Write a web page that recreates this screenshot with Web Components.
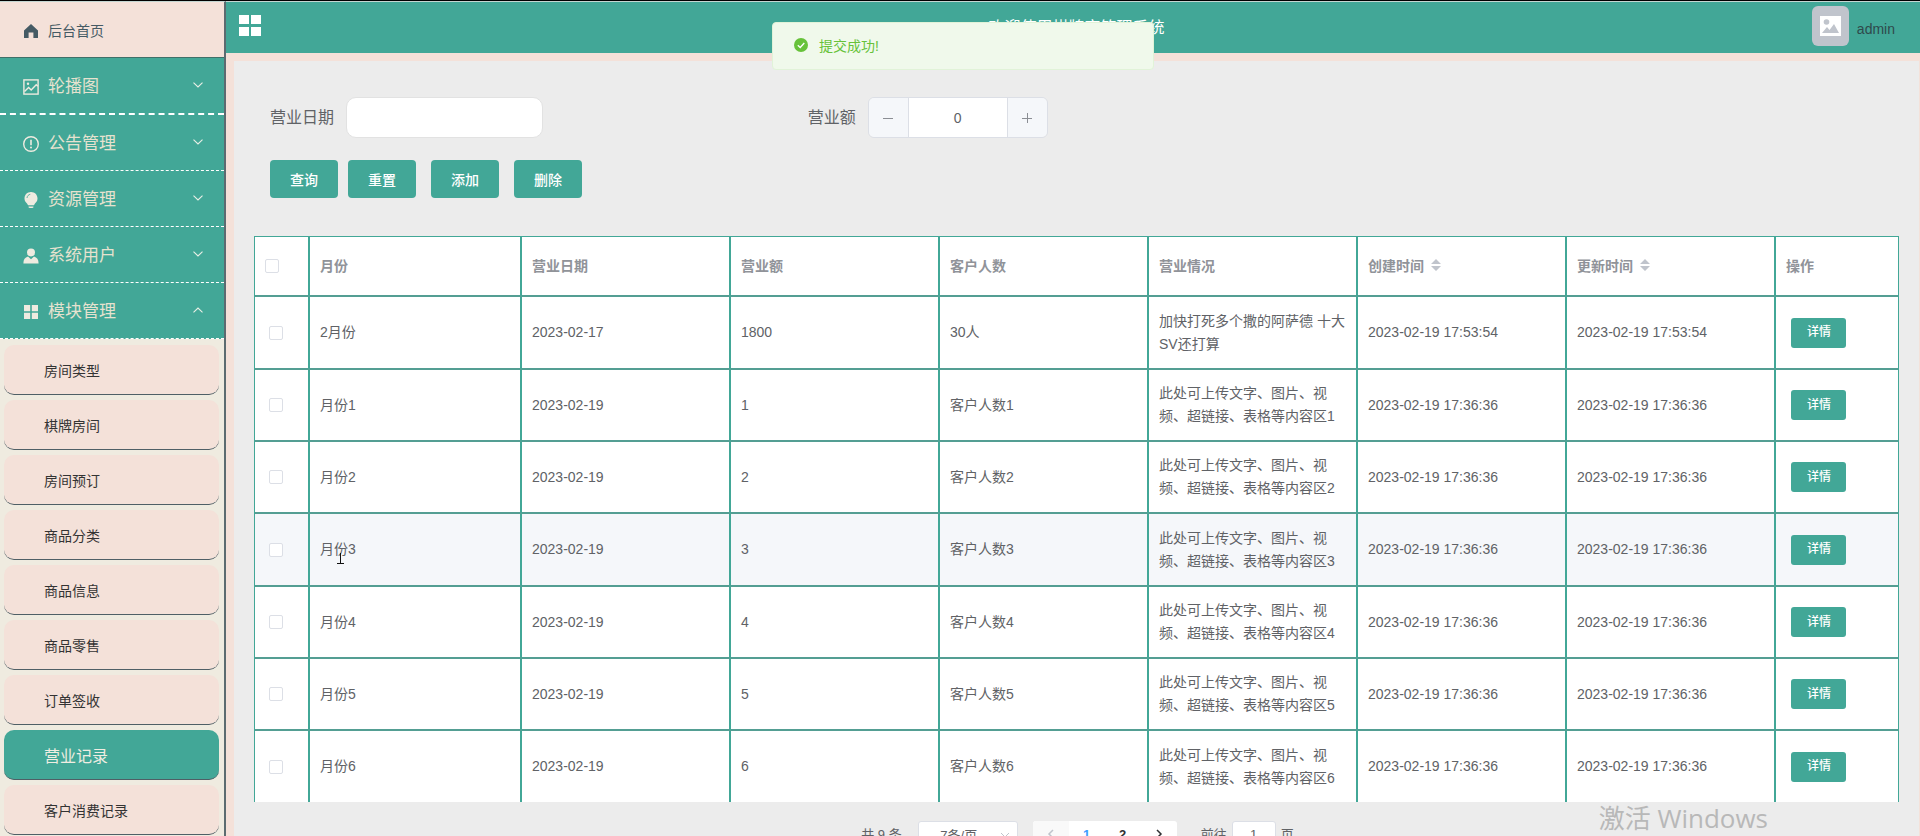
<!DOCTYPE html>
<html lang="zh-CN">
<head>
<meta charset="utf-8">
<title>营业记录</title>
<style>
  html, body { margin: 0; height: 100%; }
  body {
    overflow: hidden;
    font-family: "Liberation Sans", "Noto Sans CJK SC", sans-serif;
    font-size: 14px;
    color: #606266;
    --green: #42a797;
    --pink: #f4e1d9;
    --cream: #efebe0;
    --slate: #5c6b70;
  }
</style>
</head>
<body>
<app-shell>
  <side-bar slot="side">
    <home-link>后台首页</home-link>
    <nav-group icon="picture" thick>轮播图</nav-group>
    <nav-group icon="warning">公告管理</nav-group>
    <nav-group icon="bulb">资源管理</nav-group>
    <nav-group icon="user">系统用户</nav-group>
    <nav-group icon="grid" open>模块管理</nav-group>
    <sub-menu>
      <sub-item>房间类型</sub-item>
      <sub-item>棋牌房间</sub-item>
      <sub-item>房间预订</sub-item>
      <sub-item>商品分类</sub-item>
      <sub-item>商品信息</sub-item>
      <sub-item>商品零售</sub-item>
      <sub-item>订单签收</sub-item>
      <sub-item active>营业记录</sub-item>
      <sub-item>客户消费记录</sub-item>
    </sub-menu>
  </side-bar>
  <top-bar slot="top">
    欢迎使用棋牌室管理系统
    <span slot="user">admin</span>
  </top-bar>
  <search-form></search-form>
  <record-table></record-table>
  <page-nav></page-nav>
</app-shell>
<toast-message>提交成功!</toast-message>
<os-watermark>激活 Windows</os-watermark>
<text-cursor></text-cursor>

<script>
const define = (name, html, setup) => {
  const template = document.createElement('template');
  template.innerHTML = html;
  customElements.define(name, class extends HTMLElement {
    static observedAttributes = ['name'];
    constructor() {
      super();
      this.attachShadow({ mode: 'open' }).append(template.content.cloneNode(true));
    }
    connectedCallback() { if (setup) setup(this, this.shadowRoot); }
    attributeChangedCallback() { if (setup) setup(this, this.shadowRoot); }
  });
};

const icons = {
  home: '<path d="M8 1 1 7.4V15h4.6V9.6h4.8V15H15V7.4z" fill="currentColor"/>',
  picture: '<g fill="none" stroke="currentColor" stroke-width="1.4"><rect x=".9" y=".9" width="14.2" height="14.2"/><path d="M1.5 12.5 5.6 8.4l2.6 2.7 5-5.4 1.6 1.6"/></g><circle cx="5" cy="4.8" r="1.2" fill="currentColor"/>',
  warning: '<circle cx="8" cy="8" r="7.3" fill="none" stroke="currentColor" stroke-width="1.4"/><path d="M7.2 3.8h1.6v5.4H7.2z" fill="currentColor"/><circle cx="8" cy="11.5" r="1" fill="currentColor"/>',
  bulb: '<path d="M8 0C4.200 0 1.500 2.800 1.500 6.400c0 2.400 1.300 3.800 2.500 5.100.5.600.9 1.200 1 1.700h6c.1-.5.5-1.100 1-1.700 1.200-1.300 2.500-2.700 2.500-5.100C14.500 2.800 11.800 0 8 0z" fill="currentColor"/><path d="M5.600 14.600h4.800v.5c0 .6-.5.900-1 .9H6.600c-.5 0-1-.3-1-.9z" fill="currentColor"/><path d="M4 6C4.200 4 5.500 2.600 7.300 2.300" fill="none" stroke="#42a797" stroke-width=".8"/>',
  user: '<circle cx="8" cy="4.400" r="4" fill="currentColor"/><path d="M.4 15.500c0-3.700 1.600-6.100 4.600-6.900l3 2.700 3-2.700c3 .8 4.600 3.200 4.600 6.900z" fill="currentColor"/>',
  grid: '<path d="M1 1h6.200v6.200H1zM8.800 1H15v6.200H8.800zM1 8.800h6.200V15H1zM8.800 8.800H15V15H8.800z" fill="currentColor"/>'
};

define('app-icon', `
  <style>
    :host { display: block; width: 16px; height: 16px; }
    svg { display: block; width: 100%; height: 100%; }
  </style>
  <svg viewBox="0 0 16 16" aria-hidden="true"></svg>`,
  (el, root) => { root.querySelector('svg').innerHTML = icons[el.getAttribute('name')] || ''; });

define('app-shell', `
  <style>
    :host {
      display: grid; grid-template: auto minmax(0, 1fr) / 226px minmax(0, 1fr);
      height: 100vh; box-sizing: border-box;
      border-top: 1px solid #000; background: #ececec;
    }
    aside { grid-row: 1 / 3; overflow: hidden; border-top: 1px solid #c4d6d2; border-right: 2px solid var(--slate); background: var(--cream); }
    header { border-top: 1px solid #c4d6d2; }
    main { overflow: hidden; border: 8px solid var(--pink); border-right-width: 1px; border-bottom: 0; padding: 36px 20px 0; }
  </style>
  <aside><slot name="side"></slot></aside>
  <header><slot name="top"></slot></header>
  <main><slot></slot></main>`);

define('side-bar', `
  <style>:host { display: block; }</style>
  <nav><slot></slot></nav>`);

define('home-link', `
  <style>
    :host { display: block; }
    a {
      display: flex; align-items: center; gap: 9px; height: 56px; padding: 0 23px;
      box-sizing: border-box; background: var(--pink); color: #455a64;
      text-decoration: none; border-bottom: 1px solid #3f7069;
    }
    app-icon { margin-top: 2px; }
  </style>
  <a href="#home"><app-icon name="home"></app-icon><span><slot></slot></span></a>`);

define('nav-group', `
  <style>
    :host { display: block; }
    button {
      display: flex; align-items: center; gap: 9px; width: 100%; height: 56px; box-sizing: border-box;
      padding: 0 21px 2px 23px; border: 0; border-bottom: 1px dashed #fff;
      background: var(--green); color: #e6e2cf; font: inherit; font-size: 17px; text-align: left;
    }
    :host([thick]) button { height: 57px; border-bottom-width: 2px; }
    app-icon { color: var(--cream); margin-top: 5px; }
    span { flex: 1; }
    svg { width: 10px; height: 6px; }
    :host([open]) svg { transform: rotate(180deg); }
  </style>
  <button type="button">
    <app-icon></app-icon><span><slot></slot></span>
    <svg viewBox="0 0 10 6" aria-hidden="true"><path d="M.5.6 5 5 9.500.6" fill="none" stroke="#e9efe6" stroke-width="1.100"/></svg>
  </button>`,
  (el, root) => {
    root.querySelector('app-icon').setAttribute('name', el.getAttribute('icon'));
    root.querySelector('button').setAttribute('aria-expanded', el.hasAttribute('open'));
  });

define('sub-menu', `
  <style>:host { display: flex; flex-direction: column; gap: 5px; padding: 6px 5px 6px 4px; }</style>
  <slot></slot>`);

define('sub-item', `
  <style>
    :host { display: block; }
    a {
      display: flex; align-items: center; height: 50px; box-sizing: border-box; padding: 1px 0 0 40px;
      border-bottom: 1px solid #4f5f66; border-radius: 10px;
      background: var(--pink); color: #333; text-decoration: none;
    }
    :host([active]) a { background: var(--green); color: #f0ede2; font-size: 16px; }
  </style>
  <a href="#module"><slot></slot></a>`);

define('top-bar', `
  <style>
    :host {
      display: grid; grid-template-columns: 1fr auto 1fr; align-items: center;
      height: 51px; padding: 0 6px 0 13px; background: var(--green);
    }
    .menu { width: 22px; height: 22px; padding: 0; border: 0; background: none; margin-bottom: 4px; }
    .menu svg { display: block; }
    h1 { margin: 0; padding-bottom: 4px; font-size: 16px; font-weight: 400; color: #fff; }
    .user { display: flex; align-items: center; justify-content: flex-end; gap: 8px; padding: 0 19px 4px 0; color: #2f4a4c; }
    .avatar { display: grid; place-items: center; width: 37px; height: 40px; border-radius: 6px; background: #c0c4cc; }
    .name { padding-top: 6px; }
  </style>
  <button class="menu" type="button" aria-label="菜单">
    <svg width="22" height="22" viewBox="0 0 22 22"><path d="M0 0h10v9H0zM12 0h10v9H12zM0 12h10v9H0zM12 12h10v9H12z" fill="#fff"/></svg>
  </button>
  <h1><slot></slot></h1>
  <div class="user">
    <span class="avatar"><svg width="21" height="20" viewBox="0 0 21 20"><path d="M0 0h21v20H0z" fill="#fff"/><circle cx="6.500" cy="6" r="2.800" fill="#c0c4cc"/><path d="M2 17l5-6 2.500 3L14 8l5 9z" fill="#c0c4cc"/></svg></span>
    <span class="name"><slot name="user"></slot></span>
  </div>`);

define('action-button', `
  <style>
    :host { display: inline-block; }
    button {
      display: block; height: 38px; padding: 0 20px; border: 0; border-radius: 4px;
      background: var(--green); color: #fff; font: inherit; font-size: 14px; font-weight: 500; white-space: nowrap;
    }
    :host([small]) button { height: 30px; padding: 0 15px 0 16px; font-size: 12px; border-radius: 3px; }
  </style>
  <button type="button"><slot></slot></button>`);

define('search-form', `
  <style>
    :host { display: block; padding: 0 16px; margin-bottom: 38px; }
    form { display: flex; flex-direction: column; gap: 22px; }
    .fields { display: grid; grid-template-columns: repeat(3, 1fr); }
    .field { display: flex; align-items: center; gap: 12px; font-size: 16px; height: 41px; }
    label { line-height: 24px; }
    input { box-sizing: border-box; font: inherit; font-size: 14px; color: #606266; background: #fff; outline: 0; }
    #day { width: 197px; height: 41px; padding: 0 15px; border: 1px solid #e2e2e2; border-radius: 10px; }
    .number { display: flex; height: 41px; box-sizing: border-box; border: 1px solid #dcdfe6; border-radius: 6px; overflow: hidden; }
    .number button { width: 39px; border: 0; padding: 0; display: grid; place-items: center; background: #f5f7fa; }
    .number input { width: 100px; border: solid #dcdfe6; border-width: 0 1px; text-align: center; font-size: 14px; }
    .actions { display: flex; gap: 15px; }
    .pair { display: flex; gap: 10px; }
  </style>
  <form>
    <div class="fields">
      <div class="field"><label for="day">营业日期</label><input id="day" type="text"></div>
      <div class="field"><label for="amount">营业额</label>
        <div class="number">
          <button type="button" aria-label="减少"><svg width="12" height="12"><path d="M1 6.500h10" stroke="#8b8e94"/></svg></button>
          <input id="amount" type="text" inputmode="numeric" value="0">
          <button type="button" aria-label="增加"><svg width="12" height="12"><path d="M1 6.500h10M6.500 1v10" stroke="#8b8e94"/></svg></button>
        </div>
      </div>
    </div>
    <div class="actions">
      <div class="pair"><action-button>查询</action-button><action-button>重置</action-button></div>
      <action-button>添加</action-button>
      <action-button>删除</action-button>
    </div>
  </form>`);

define('record-table', `
  <style>
    :host { display: block; }
    table { width: 100%; table-layout: fixed; border-collapse: separate; border-spacing: 0; border: solid var(--green); border-width: 1px 1px 0; background: #fff; line-height: 23px; }
    .c-check { width: 55px; } .c-month { width: 212px; } .c-action { width: 122px; }
    th, td { box-sizing: border-box; padding: 0 10px; text-align: left; border-right: 2px solid var(--green); border-bottom: 2px solid #549e93; }
    th { height: 60px; color: #909399; font-weight: 700; }
    td { height: 72px; }
    tbody tr:nth-child(3n + 1) td { height: 73px; }
    th:last-child, td:last-child { border-right: 0; }
    tbody tr:last-child td { height: 71px; border-bottom: 0; }
    tr.hover td { background: #f5f7fa; }
    input { appearance: none; display: block; width: 14px; height: 14px; box-sizing: border-box; margin: 0; border: 1px solid #dcdfe6; border-radius: 2px; background: #fff; }
    td input { margin-left: 4px; }
    td action-button { display: block; margin-left: 5px; }
    .sort { display: inline-flex; vertical-align: middle; margin: 0 0 3px 7px; }
  </style>
  <table>
    <colgroup><col class="c-check"><col class="c-month"><col><col><col><col><col><col><col class="c-action"></colgroup>
    <thead><tr>
      <th><input type="checkbox" aria-label="全选"></th>
      <th>月份</th><th>营业日期</th><th>营业额</th><th>客户人数</th><th>营业情况</th>
      <th>创建时间<svg class="sort" width="10" height="12"><path d="M0 5h10L5 0zM0 7h10L5 12z" fill="#c0c4cc"/></svg></th>
      <th>更新时间<svg class="sort" width="10" height="12"><path d="M0 5h10L5 0zM0 7h10L5 12z" fill="#c0c4cc"/></svg></th>
      <th>操作</th>
    </tr></thead>
    <tbody></tbody>
  </table>`,
  (el, root) => {
    const rows = [['2月份', '2023-02-17', '1800', '30人', '加快打死多个撒的阿萨德 十大SV还打算', '2023-02-19 17:53:54']];
    for (let i = 1; i <= 6; i++)
      rows.push(['月份' + i, '2023-02-19', i, '客户人数' + i, '此处可上传文字、图片、视频、超链接、表格等内容区' + i, '2023-02-19 17:36:36']);
    root.querySelector('tbody').innerHTML = rows.map((r, i) =>
      `<tr${i === 3 ? ' class="hover"' : ''}><td><input type="checkbox" aria-label="选择${r[0]}"></td>` +
      [...r, r[5]].map(v => `<td>${v}</td>`).join('') +
      '<td><action-button small>详情</action-button></td></tr>').join('');
  });

define('page-nav', `
  <style>
    :host { display: flex; justify-content: center; align-items: center; margin-top: 19px; padding-left: 2px; font-size: 13px; line-height: 28px; white-space: nowrap; }
    select, input { box-sizing: border-box; height: 28px; border: 1px solid #dcdfe6; border-radius: 3px; background: #fff; color: #606266; font: inherit; text-align: center; padding: 0; }
    .size { position: relative; margin: 0 15px 0 16px; }
    select { display: block; appearance: none; width: 100px; padding-right: 18px; text-align-last: center; }
    .size svg { position: absolute; right: 8px; top: 11px; }
    .pages { display: flex; margin-right: 24px; border-radius: 3px; overflow: hidden; background: #fff; }
    .pages button { width: 36px; height: 28px; border: 0; padding: 0; background: none; color: #303133; font: inherit; font-weight: 700; }
    .pages button[disabled] { background: #f9f9f9; }
    .pages .on { color: #409eff; }
    .jump { display: flex; gap: 5px; }
    input { width: 44px; }
  </style>
  <span>共 9 条</span>
  <span class="size">
    <select aria-label="每页条数"><option>7条/页</option></select>
    <svg width="10" height="6"><path d="M1 1l4 4 4-4" fill="none" stroke="#c0c4cc"/></svg>
  </span>
  <div class="pages">
    <button type="button" disabled aria-label="上一页"><svg width="8" height="10"><path d="M6 1 2 5l4 4" fill="none" stroke="#c0c4cc" stroke-width="1.500"/></svg></button>
    <button type="button" class="on">1</button>
    <button type="button">2</button>
    <button type="button" aria-label="下一页"><svg width="8" height="10"><path d="M2 1l4 4-4 4" fill="none" stroke="#303133" stroke-width="1.500"/></svg></button>
  </div>
  <div class="jump"><label for="page">前往</label><input id="page" type="text" value="1"><span>页</span></div>`);

define('toast-message', `
  <style>
    :host {
      position: absolute; top: 22px; left: 50%; margin-left: -188px; width: 382px; height: 48px; box-sizing: border-box;
      display: flex; align-items: center; gap: 11px; padding: 0 21px 2px; border: 1px solid #e1f3d8; border-radius: 4px;
      background: #f0f9eb; color: #67c23a;
    }
  </style>
  <svg width="14" height="14" viewBox="0 0 14 14" aria-hidden="true"><circle cx="7" cy="7" r="7" fill="#67c23a"/><path d="M3.800 7.200 6.200 9.500 10.300 5" fill="none" stroke="#fff" stroke-width="1.300"/></svg>
  <span role="status"><slot></slot></span>`);

define('os-watermark', `
  <style>
    :host {
      position: absolute; right: 152px; bottom: 0; pointer-events: none; white-space: nowrap;
      font-family: "Open Sans", "Noto Sans CJK SC", sans-serif; font-size: 26px; line-height: 36px; font-weight: 400; color: #b8b8b8;
    }
  </style>
  <slot></slot>`);

define('text-cursor', `
  <style>:host { position: absolute; left: 336px; top: 552px; pointer-events: none; } svg { display: block; }</style>
  <svg width="8" height="12" aria-hidden="true"><path d="M4.500 1v10M1 11.500h7" stroke="#111" fill="none"/></svg>`);
</script>
</body>
</html>
